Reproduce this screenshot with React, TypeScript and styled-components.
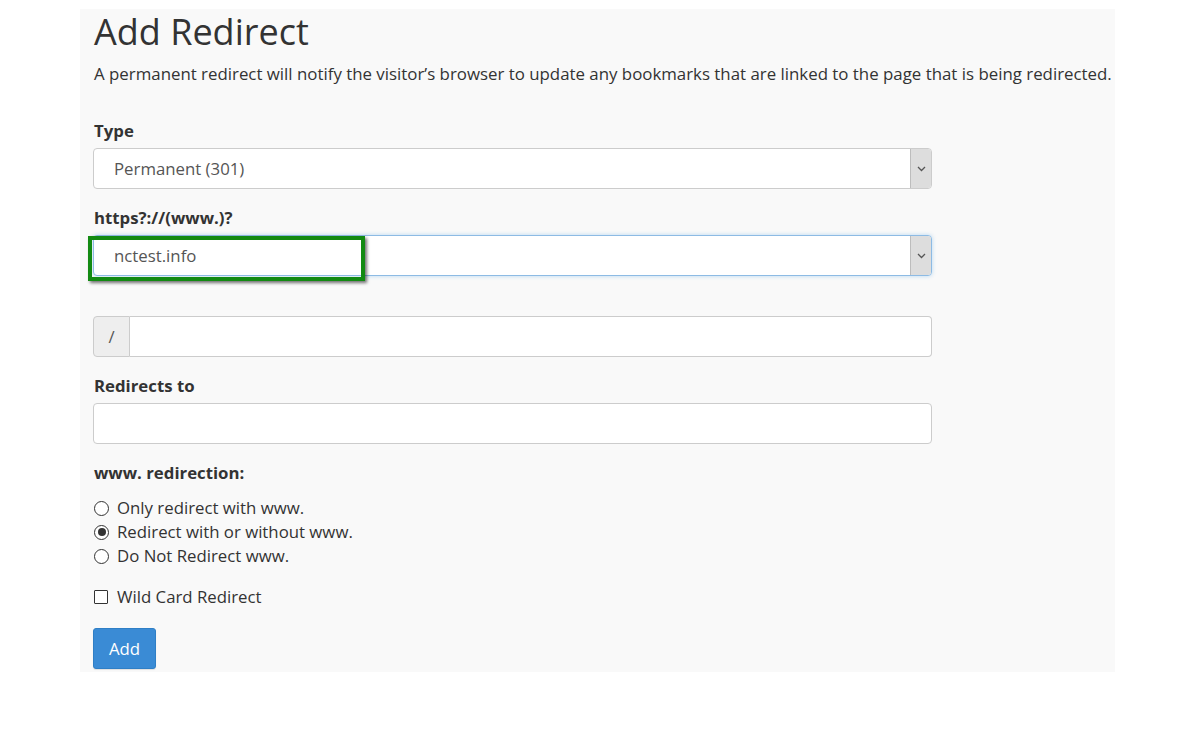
import React from "react";
import styled, { createGlobalStyle } from "styled-components";

const GlobalStyle = createGlobalStyle`
  body {
    margin: 0;
    background: #ffffff;
    font-family: "Open Sans", "Liberation Sans", sans-serif;
    font-size: 16.8px;
    color: #333333;
  }
`;

const Panel = styled.main`
  margin: 9px 0 0 80px;
  width: 1035px;
  height: 663px;
  box-sizing: border-box;
  padding: 0 13px;
  background: #f9f9f9;
`;

const Title = styled.h1`
  margin: 0;
  padding: 3px 0 0 1px;
  font-size: 36px;
  line-height: 40px;
  font-weight: 400;
  color: #333333;
`;

const Description = styled.p`
  margin: 10px 0 0 1px;
  font-size: 16.85px;
  line-height: 24px;
  white-space: nowrap;
`;

const Group = styled.div<{ $top: number }>`
  margin-top: ${(p) => p.$top}px;
  width: 839px;
  position: relative;
`;

const Label = styled.div`
  font-weight: 700;
  line-height: 24px;
  margin: 0 0 5px 1px;
`;

const Select = styled.div<{ $focused?: boolean }>`
  display: flex;
  height: 41px;
  box-sizing: border-box;
  background: #ffffff;
  border: 1px solid ${(p) => (p.$focused ? "#8dbbe4" : "#cccccc")};
  border-radius: 4px;
  box-shadow: ${(p) =>
    p.$focused ? "0 0 4px rgba(102, 175, 233, 0.45)" : "none"};
`;

const SelectText = styled.span`
  flex: 1;
  padding-left: 20px;
  line-height: 39px;
  color: #555555;
`;

const ArrowBox = styled.span`
  width: 20px;
  display: flex;
  align-items: center;
  justify-content: center;
  background: #dddddd;
  border-left: 1px solid #bdbdbd;
  border-radius: 0 3px 3px 0;
`;

const Highlight = styled.div`
  position: absolute;
  left: -5px;
  top: 30px;
  width: 277px;
  height: 45px;
  box-sizing: border-box;
  border: 4px solid #128a12;
  box-shadow: 2px 2px 3px rgba(0, 0, 0, 0.55);
  pointer-events: none;
`;

const InputGroup = styled.div`
  display: flex;
  height: 41px;
`;

const Addon = styled.span`
  width: 37px;
  box-sizing: border-box;
  display: flex;
  align-items: center;
  justify-content: center;
  background: #eeeeee;
  border: 1px solid #cccccc;
  border-radius: 4px 0 0 4px;
  color: #555555;
`;

const TextInput = styled.div<{ $joined?: boolean }>`
  flex: 1;
  height: 41px;
  box-sizing: border-box;
  background: #ffffff;
  border: 1px solid #cccccc;
  border-left-width: ${(p) => (p.$joined ? 0 : 1)}px;
  border-radius: ${(p) => (p.$joined ? "0 4px 4px 0" : "4px")};
`;

const OptionList = styled.div`
  margin-top: 11px;
  display: flex;
  flex-direction: column;
`;

const Option = styled.div`
  display: flex;
  align-items: center;
  gap: 8px;
  line-height: 24px;
  padding-left: 1px;
`;

const Radio = styled.span<{ $checked?: boolean }>`
  width: 15px;
  height: 15px;
  box-sizing: border-box;
  border: 1.3px solid #333333;
  border-radius: 50%;
  display: flex;
  align-items: center;
  justify-content: center;
  background: #ffffff;
  &::after {
    content: "";
    width: 8px;
    height: 8px;
    border-radius: 50%;
    background: ${(p) => (p.$checked ? "#333333" : "transparent")};
  }
`;

const Checkbox = styled.span`
  width: 14px;
  height: 14px;
  box-sizing: border-box;
  border: 1.5px solid #333333;
  border-radius: 1px;
  background: #ffffff;
`;

const CheckRow = styled(Option)`
  margin-top: 17px;
  gap: 9px;
`;

const AddButton = styled.button`
  margin-top: 19px;
  height: 41px;
  width: 63px;
  padding: 0;
  border: 1px solid #2f7fc6;
  border-radius: 3px;
  background: #3a8bd5;
  color: #ffffff;
  font-family: inherit;
  font-size: 16.8px;
  box-shadow: 0 1px 1px rgba(0, 0, 0, 0.1);
`;

const Chevron = () => (
  <svg width="9" height="6" viewBox="0 0 9 6">
    <path d="M1 1l3.5 3.5L8 1" fill="none" stroke="#555" strokeWidth="1.3" />
  </svg>
);

const App = () => {
  return (
    <>
      <GlobalStyle />
      <Panel>
        <Title>Add Redirect</Title>
        <Description>
          A permanent redirect will notify the visitor’s browser to update any
          bookmarks that are linked to the page that is being redirected.
        </Description>

        <Group $top={33}>
          <Label>Type</Label>
          <Select>
            <SelectText>Permanent (301)</SelectText>
            <ArrowBox>
              <Chevron />
            </ArrowBox>
          </Select>
        </Group>

        <Group $top={17}>
          <Label>https?://(www.)?</Label>
          <Select $focused>
            <SelectText>nctest.info</SelectText>
            <ArrowBox>
              <Chevron />
            </ArrowBox>
          </Select>
          <Highlight />
        </Group>

        <Group $top={40}>
          <InputGroup>
            <Addon>/</Addon>
            <TextInput $joined />
          </InputGroup>
        </Group>

        <Group $top={17}>
          <Label>Redirects to</Label>
          <TextInput />
        </Group>

        <Group $top={17}>
          <Label>www. redirection:</Label>
          <OptionList>
            <Option>
              <Radio />
              Only redirect with www.
            </Option>
            <Option>
              <Radio $checked />
              Redirect with or without www.
            </Option>
            <Option>
              <Radio />
              Do Not Redirect www.
            </Option>
          </OptionList>
          <CheckRow>
            <Checkbox />
            Wild Card Redirect
          </CheckRow>
          <AddButton>Add</AddButton>
        </Group>
      </Panel>
    </>
  );
};

export default App;
